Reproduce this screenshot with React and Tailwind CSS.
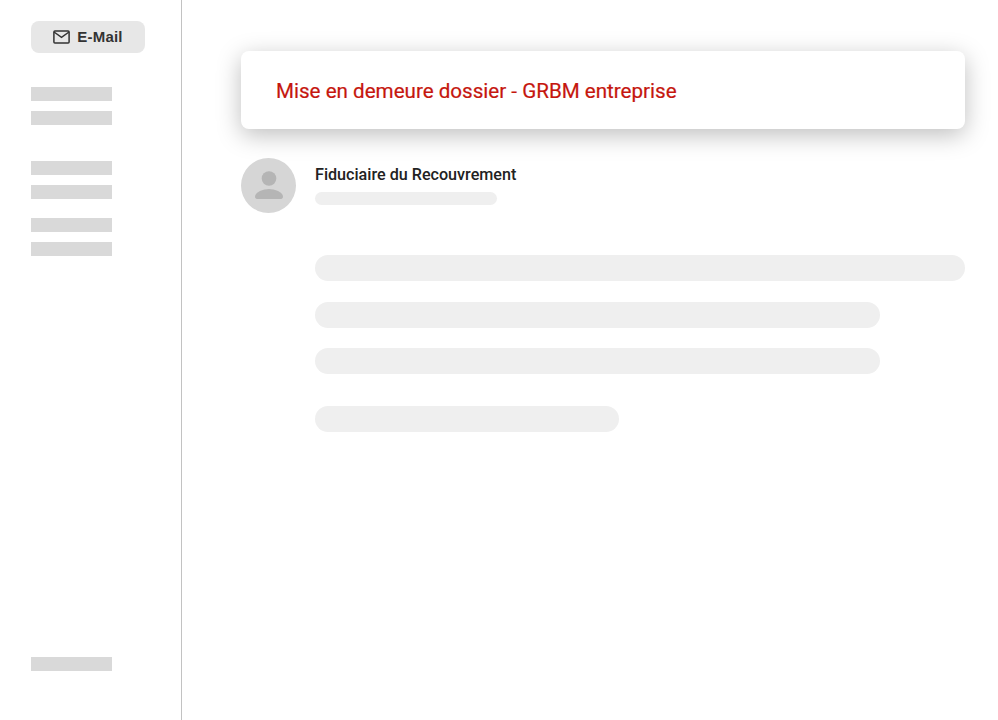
import React from 'react';

const SideBar = ({ className = '' }) => <div className={`w-[81px] h-3.5 bg-[#d9d9d9] ${className}`} />;

const BodyLine = ({ width, className = '' }) => (
  <div className={`h-[26px] rounded-full bg-[#efefef] ${width} ${className}`} />
);

const App = () => {
  return (
    <div className="flex h-[720px] w-[998px] overflow-hidden bg-white">
      {/* Sidebar */}
      <aside className="flex h-full w-[182px] shrink-0 flex-col border-r border-[#c2c2c2] pl-[31px] pt-[21px] pb-[49px]">
        <div className="flex h-8 w-[114px] items-center justify-center gap-[7px] rounded-lg bg-[#e7e7e7] font-['Liberation_Sans',sans-serif] text-[15px] font-bold text-[#333333]">
          <svg width="17" height="14" viewBox="0 0 17 14" fill="none" stroke="#333333" strokeWidth="1.5">
            <rect x="0.9" y="0.9" width="15.2" height="12" rx="1" />
            <path d="M1 2l7.5 5.400L16 2" />
          </svg>
          <span className="tracking-[0.2px]">E-Mail</span>
        </div>

        <SideBar className="mt-[34px]" />
        <SideBar className="mt-2.5" />
        <SideBar className="mt-9" />
        <SideBar className="mt-2.5" />
        <SideBar className="mt-[19px]" />
        <SideBar className="mt-2.5" />
        <SideBar className="mt-auto" />
      </aside>

      {/* Message */}
      <main className="w-[783px] pl-[59px] pt-[51px] font-['Roboto',sans-serif]">
        <div className="flex h-[78px] w-[724px] items-center rounded-lg bg-white pl-[35px] pt-[2px] text-[20.6px] text-[#c5160e] [-webkit-text-stroke:0.2px_#c5160e] shadow-[0_6px_24px_rgba(0,0,0,0.26)]">
          Mise en demeure dossier - GRBM entreprise
        </div>

        <div className="mt-[29px] flex gap-[19px]">
          <div className="flex h-[55px] w-[55px] items-center justify-center rounded-full bg-[#d6d6d6]">
            <svg width="28" height="28" viewBox="0 0 28 28" fill="#b5b5b5" className="-mt-[1px]">
              <circle cx="14" cy="7.500" r="7.300" />
              <path d="M0 25.500c0-4.500 8.500-7.500 14-7.500s14 3 14 7.500c0 1.500-.8 2.500-2 2.500H2c-1.200 0-2-1-2-2.500z" />
            </svg>
          </div>
          <div>
            <div className="mt-[7px] text-[16.15px] leading-5 font-medium text-[#222222]">Fiduciaire du Recouvrement</div>
            <div className="mt-[7px] h-[13px] w-[182px] rounded-full bg-[#efefef]" />
          </div>
        </div>

        <div className="ml-[74px] mt-[42px]">
          <BodyLine width="w-[650px]" />
          <BodyLine width="w-[565px]" className="mt-[21px]" />
          <BodyLine width="w-[565px]" className="mt-[20px]" />
          <BodyLine width="w-[304px]" className="mt-[32px]" />
        </div>
      </main>
    </div>
  );
};

export default App;
